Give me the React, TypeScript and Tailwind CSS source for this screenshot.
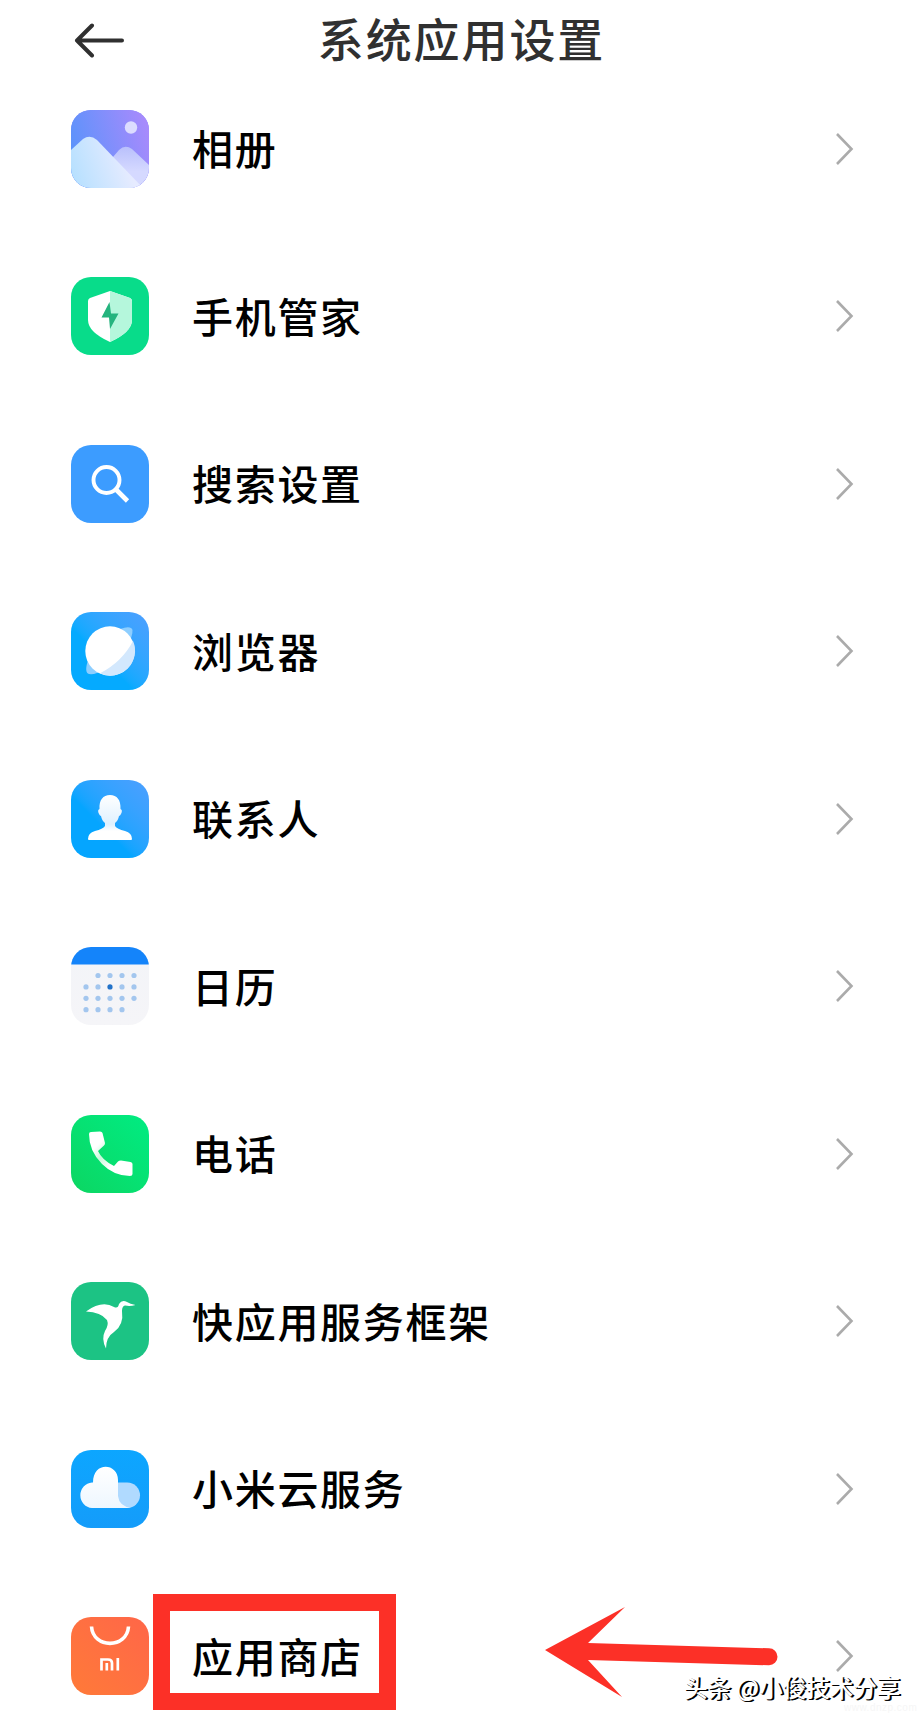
import type { ReactNode } from 'react';

const Mountains = () => (
  <svg viewBox="0 0 78 78" className="size-full">
    <defs>
      <linearGradient id="sky" x1="0" y1="0.5" x2="1" y2="0.2">
        <stop offset="0" stopColor="#5b93fb" />
        <stop offset="1" stopColor="#a98afc" />
      </linearGradient>
      <linearGradient id="front" x1="0" y1="0.8" x2="0.8" y2="0.6">
        <stop offset="0" stopColor="#b5e0ff" />
        <stop offset="1" stopColor="#e6ebff" />
      </linearGradient>
      <linearGradient id="back" x1="0" y1="0" x2="0" y2="1">
        <stop offset="0" stopColor="#b9c0fc" />
        <stop offset="0.6" stopColor="#d5d9ff" />
      </linearGradient>
    </defs>
    <rect width="78" height="78" fill="url(#sky)" />
    <circle cx="60" cy="17.500" r="6.200" fill="#dcdcff" />
    <path d="M36 54 L48 40 Q54 34 61 39 L78 55 V78 H36Z" fill="url(#back)" />
    <path d="M0 40 L12 29 Q19 24 26 30 L72 78 H0Z" fill="url(#front)" />
  </svg>
);

const Shield = () => (
  <svg viewBox="0 0 78 78" className="size-full">
    <path d="M39 14 L59 21 Q61 22 61 24 V43 Q61 55 39 65 Q17 55 17 43 V24 Q17 22 19 21Z" fill="#fff" />
    <path d="M39 14 L59 21 Q61 22 61 24 V43 Q61 55 39 65Z" fill="#b5f7dc" />
    <path d="M38.500 25 L30.500 40.500 H38 L39 52 L47.500 36.500 H40Z" fill="#25b47e" />
  </svg>
);

const Search = () => (
  <svg viewBox="0 0 78 78" className="size-full" fill="none" stroke="#fff">
    <circle cx="35.500" cy="35" r="13" strokeWidth="3.900" />
    <path d="M44.500 44 L56.500 56" strokeWidth="4.600" />
  </svg>
);

const Planet = () => (
  <svg viewBox="0 0 78 78" className="size-full">
    <path d="M49 17 Q60 13 61.500 18 Q62 24 56 34Z" fill="#8dceff" />
    <path d="M17 48 Q13 61 18 62 Q24 63 33 58Z" fill="#8dceff" />
    <circle cx="39" cy="39" r="24.700" fill="#fff" />
    <path d="M62 29 A24.700 24.700 0 0 1 29 61.300 Q51 50 62 29Z" fill="#d3e8fd" />
  </svg>
);

const Person = () => (
  <svg viewBox="0 0 78 78" className="size-full">
    <defs>
      <linearGradient id="person" x1="0" y1="0" x2="0" y2="1">
        <stop offset="0" stopColor="#fff" />
        <stop offset="0.65" stopColor="#dff1ff" />
        <stop offset="0.8" stopColor="#fff" />
      </linearGradient>
    </defs>
    <path
      d="M39 15 C46 15 50 20 49.500 29 Q52 30 50 34 Q49 36 48 36 Q47 41 44 43 V46 Q46 49 54 51 Q61 53 61 59 Q61 60 60 60 H18 Q17 60 17 59 Q17 53 24 51 Q32 49 34 46 V43 Q31 41 30 36 Q29 36 28 34 Q26 30 28.500 29 C28 20 32 15 39 15Z"
      fill="url(#person)"
    />
  </svg>
);

const days = [
  [1, 2, 3, 4],
  [0, 1, 2, 3, 4],
  [0, 1, 2, 3, 4],
  [0, 1, 2, 3],
];

const Calendar = () => (
  <svg viewBox="0 0 78 78" className="size-full">
    <rect width="78" height="17.500" fill="#1484fa" />
    {days.map((row, r) =>
      row.map((c) => (
        <circle
          key={`${r}-${c}`}
          cx={15 + c * 12}
          cy={28.5 + r * 11.4}
          r="2.600"
          fill={r === 1 && c === 2 ? '#2272c9' : '#a3c6ee'}
        />
      )),
    )}
  </svg>
);

const Phone = () => (
  <svg viewBox="0 0 78 78" className="size-full">
    <defs>
      <linearGradient id="phone" x1="0" y1="0" x2="1" y2="1">
        <stop offset="0.25" stopColor="#fff" />
        <stop offset="0.42" stopColor="#c9f9dc" />
        <stop offset="0.65" stopColor="#fff" />
      </linearGradient>
    </defs>
    <path
      d="M20 17 L29 16.500 Q31 16.500 31.500 18 L34 28 Q34 29.500 33 30.500 L27 36 Q31 45 43 51 L47 46.500 Q48 45.500 50 45.500 L59.500 47 Q61.500 47.500 61.500 49 V59 Q61.500 61 59 61 Q43 61 31 49 Q18 36 18 19 Q18 17 20 17Z"
      fill="url(#phone)"
    />
  </svg>
);

const Bird = () => (
  <svg viewBox="0 0 78 78" className="size-full">
    <path
      d="M15 29.500 Q31 18 43 25 Q47 27 48 22 Q51 17 56 20 Q59 22 64.500 23 Q59 24.500 54 23.500 Q51 24 51 29 Q53 43 43 50 Q35 55 35 66.500 Q30 57 34 49 Q38 43 36 38 Q30 30 15 29.500Z"
      fill="#fff"
    />
  </svg>
);

const Cloud = () => (
  <svg viewBox="0 0 78 78" className="size-full">
    <defs>
      <linearGradient id="cloud" x1="0" y1="0" x2="0" y2="1">
        <stop offset="0" stopColor="#fff" />
        <stop offset="1" stopColor="#eef7ff" />
      </linearGradient>
    </defs>
    <rect x="35" y="32.500" width="34" height="25.500" rx="12.750" fill="#b0daff" />
    <path
      d="M60 58 H21 A12.800 12.800 0 0 1 21 32.500 H22 C22 11 47 13 47 30 V46 Q48 56 60 58Z"
      fill="url(#cloud)"
    />
  </svg>
);

const Bag = () => (
  <svg viewBox="0 0 78 78" className="size-full" fill="none" stroke="#fff">
    <path d="M20.500 9.500 C22 32 56 32 57.500 9.500" strokeWidth="3.600" />
    <path d="M30.500 53.500 V42.500 H37 Q41 42.500 41 46 V53.500 M35.800 46 V53.500 M46.800 41 V53.500" strokeWidth="2.700" />
  </svg>
);

type Item = { label: string; bg: string; icon: ReactNode };

const items: Item[] = [
  { label: '相册', bg: 'bg-[#8290fb]', icon: <Mountains /> },
  { label: '手机管家', bg: 'bg-[#08dc8a]', icon: <Shield /> },
  { label: '搜索设置', bg: 'bg-[#3c9cff]', icon: <Search /> },
  { label: '浏览器', bg: 'bg-linear-to-tr from-[#05aaff] from-40% to-[#4c9fff]', icon: <Planet /> },
  { label: '联系人', bg: 'bg-linear-to-tr from-[#05a5ff] from-40% to-[#4c9fff]', icon: <Person /> },
  { label: '日历', bg: 'bg-linear-to-b from-[#f3f4f8] to-[#f5f5f8]', icon: <Calendar /> },
  { label: '电话', bg: 'bg-linear-to-bl from-[#00ec82] to-[#0cd662]', icon: <Phone /> },
  { label: '快应用服务框架', bg: 'bg-[#1cc384]', icon: <Bird /> },
  { label: '小米云服务', bg: 'bg-linear-to-b from-[#0ca6ff] to-[#149cfa]', icon: <Cloud /> },
  { label: '应用商店', bg: 'bg-linear-to-tr from-[#ff7a38] to-[#ff6648]', icon: <Bag /> },
];

function Row({ label, bg, icon }: Item) {
  return (
    <li className="flex h-[167.5px] items-center">
      <div className={`size-[78px] shrink-0 overflow-hidden rounded-[20px] ${bg}`}>{icon}</div>
      <span className="ml-[43px] flex-1 pb-[2px] text-[41px] leading-none font-medium tracking-[1.7px] text-black">
        {label}
      </span>
      <svg viewBox="0 0 20 34" className="h-[34px] w-5" fill="none" stroke="#ababab" strokeWidth="2.600">
        <path d="M1 2 L15.500 17 L1 32" />
      </svg>
    </li>
  );
}

function App() {
  return (
    <div className="relative h-[1722px] w-[923px] overflow-hidden bg-white font-['Noto_Sans_CJK_SC',sans-serif]">
      <header className="relative flex h-[65px] items-center justify-center pt-[9px]">
        <svg
          viewBox="0 0 52 36"
          className="absolute top-[22px] left-[74px] h-9 w-[52px]"
          fill="none"
          stroke="#303030"
          strokeWidth="4"
          strokeLinecap="round"
          strokeLinejoin="round"
        >
          <path d="M48 18.500 H3 M18 3.500 L3 18.500 L18 33.500" />
        </svg>
        <h1 className="text-[46px] leading-none font-medium tracking-[1.9px] text-[#303030]">系统应用设置</h1>
      </header>

      <ul className="pr-[67px] pl-[71px]">
        {items.map((item) => (
          <Row key={item.label} {...item} />
        ))}
      </ul>

      {/* highlight around the app store entry */}
      <div className="absolute top-[1594px] left-[153px] h-[116px] w-[243px] border-[17px] border-[#fc3027]" />
      <svg viewBox="0 0 240 100" className="absolute top-[1600px] left-[540px] h-[100px] w-[240px]">
        <path
          d="M5 50 L85 7 L48 43 L229 48.300 A8.500 8.500 0 0 1 229 65.300 L48 60 L82 97Z"
          fill="#fc3027"
        />
      </svg>

      <p className="absolute top-[1703px] left-[844px] font-['Liberation_Sans',sans-serif] text-[10px] leading-none tracking-[0.5px] text-[#f6f6f6]">
        www.dnzp.com
      </p>
      <p className="absolute top-[1676px] left-[684px] text-[23.500px] leading-none font-medium whitespace-nowrap text-white [text-shadow:1px_1px_0_#000,2px_1px_0_#000]">
        头条 @小俊技术分享
      </p>
    </div>
  );
}

export default App;
